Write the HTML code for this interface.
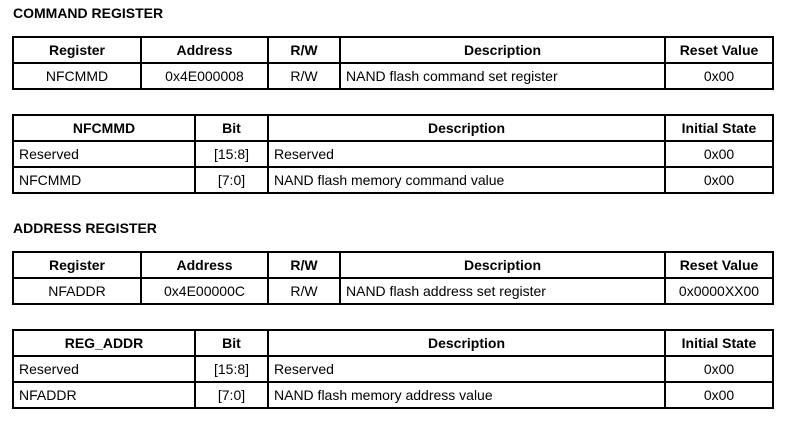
<!DOCTYPE html>
<html><head><meta charset="utf-8"><style>
body{margin:0;width:805px;height:422px;background:#fff;position:relative;font-family:"Liberation Sans",Arial,sans-serif;font-size:14px;color:#000;overflow:hidden}
.t{position:absolute;font-weight:bold;font-size:14px;left:13px}
table{position:absolute;left:12px;border-collapse:collapse;table-layout:fixed;width:760px}
td{border:2px solid #000;height:24px;padding:0 5px;white-space:nowrap;line-height:24px;box-sizing:border-box}
tr{height:26px}
.h td{font-weight:bold;text-align:center}
.c{text-align:center}
</style></head><body>
<div class="t" style="top:5px">COMMAND REGISTER</div>
<table style="top:36px">
<colgroup><col style="width:128px"><col style="width:127px"><col style="width:72px"><col style="width:325px"><col style="width:108px"></colgroup>
<tr class="h"><td>Register</td><td>Address</td><td>R/W</td><td>Description</td><td>Reset Value</td></tr>
<tr><td class="c">NFCMMD</td><td class="c">0x4E000008</td><td class="c">R/W</td><td>NAND flash command set register</td><td class="c">0x00</td></tr>
</table>
<table style="top:114px">
<colgroup><col style="width:182px"><col style="width:73px"><col style="width:397px"><col style="width:108px"></colgroup>
<tr class="h"><td>NFCMMD</td><td>Bit</td><td>Description</td><td>Initial State</td></tr>
<tr><td>Reserved</td><td class="c">[15:8]</td><td>Reserved</td><td class="c">0x00</td></tr>
<tr><td>NFCMMD</td><td class="c">[7:0]</td><td>NAND flash memory command value</td><td class="c">0x00</td></tr>
</table>
<div class="t" style="top:220px">ADDRESS REGISTER</div>
<table style="top:251px">
<colgroup><col style="width:128px"><col style="width:127px"><col style="width:72px"><col style="width:325px"><col style="width:108px"></colgroup>
<tr class="h"><td>Register</td><td>Address</td><td>R/W</td><td>Description</td><td>Reset Value</td></tr>
<tr><td class="c">NFADDR</td><td class="c">0x4E00000C</td><td class="c">R/W</td><td>NAND flash address set register</td><td class="c">0x0000XX00</td></tr>
</table>
<table style="top:329px">
<colgroup><col style="width:182px"><col style="width:73px"><col style="width:397px"><col style="width:108px"></colgroup>
<tr class="h"><td>REG_ADDR</td><td>Bit</td><td>Description</td><td>Initial State</td></tr>
<tr><td>Reserved</td><td class="c">[15:8]</td><td>Reserved</td><td class="c">0x00</td></tr>
<tr><td>NFADDR</td><td class="c">[7:0]</td><td>NAND flash memory address value</td><td class="c">0x00</td></tr>
</table>
</body></html>
